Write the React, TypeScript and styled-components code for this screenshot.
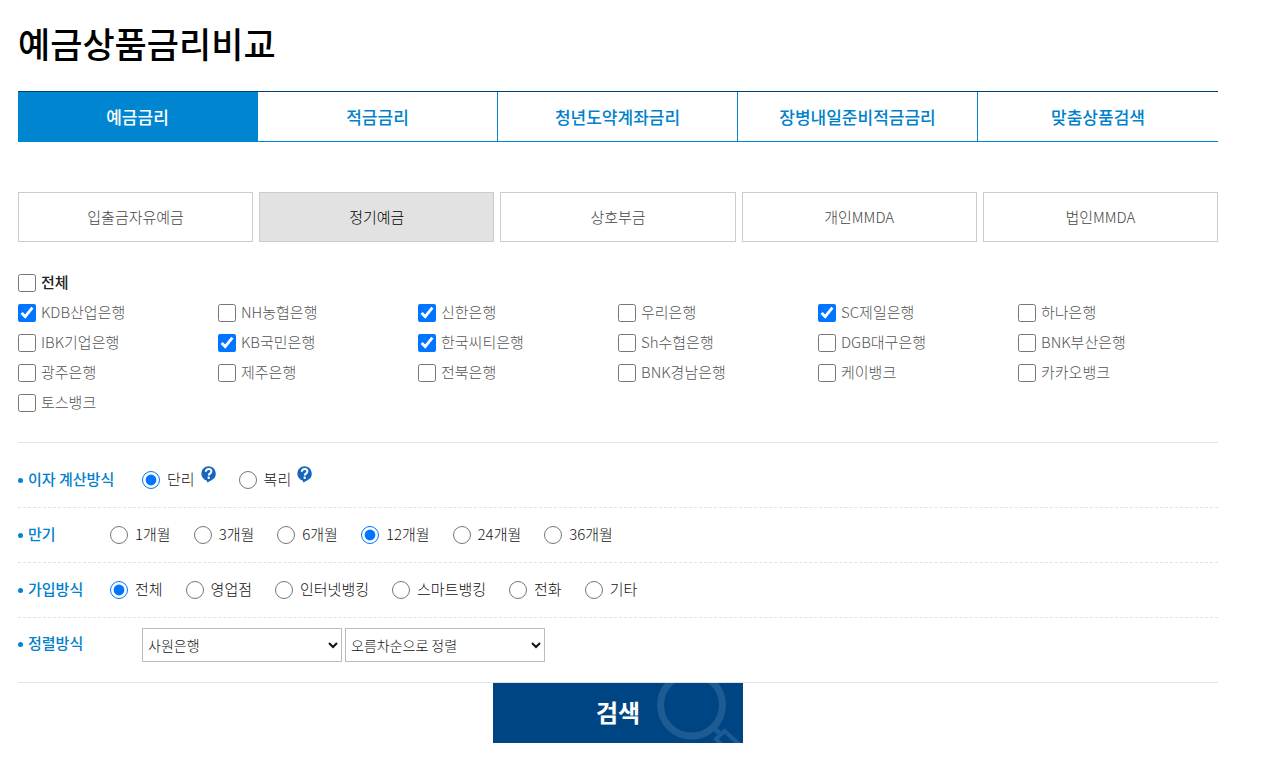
import React, { useState } from "react";
import styled, { createGlobalStyle } from "styled-components";

const GlobalStyle = createGlobalStyle`
  *, *::before, *::after { box-sizing: border-box; }
  body {
    margin: 0;
    background: #fff;
    color: #111;
    font-family: "Noto Sans CJK KR", sans-serif;
    font-size: 15px;
    font-weight: 300;
    line-height: 20px;
  }
  button, select, input { font-family: inherit; }
`;

const Page = styled.main`
  padding: 16px 51px 16px 18px;
`;

const Title = styled.h1`
  margin: 0 0 22px;
  color: #000;
  font-size: 35px;
  font-weight: 500;
  line-height: 53px;
`;

const Tabs = styled.nav`
  display: grid;
  grid-template-columns: repeat(5, 1fr);
  margin-bottom: 50px;
  border-top: 1px solid #004178;
`;

const Tab = styled.a<{ $active: boolean }>`
  display: flex;
  align-items: center;
  justify-content: center;
  height: 50px;
  border-right: 1px solid #0086d1;
  border-bottom: 1px solid #0086d1;
  background: ${(p) => (p.$active ? "#0086d1" : "#fff")};
  color: ${(p) => (p.$active ? "#fff" : "#0081cc")};
  font-size: 17px;
  font-weight: 500;
  text-decoration: none;
  &:last-child { border-right: 0; }
`;

const Kinds = styled.div`
  display: grid;
  grid-template-columns: repeat(5, 1fr);
  gap: 6px;
  margin-bottom: 26px;
`;

const Kind = styled.button<{ $active: boolean }>`
  height: 50px;
  padding: 0 0 2px;
  border: 1px solid #ccc;
  background: ${(p) => (p.$active ? "#e2e2e2" : "#fff")};
  color: ${(p) => (p.$active ? "#000" : "#444")};
  font-size: 15px;
  font-weight: 300;
  cursor: pointer;
`;

const Banks = styled.div`
  display: grid;
  grid-template-columns: repeat(6, 1fr);
  padding-bottom: 24px;
  border-bottom: 1px solid #e2e2e2;
`;

const CheckLabel = styled.label<{ $all?: boolean }>`
  display: flex;
  align-items: center;
  gap: 5px;
  height: 30px;
  grid-column: ${(p) => (p.$all ? "1 / -1" : "auto")};
  color: ${(p) => (p.$all ? "#222" : "#555")};
  font-weight: ${(p) => (p.$all ? 500 : 300)};
`;

const Tick = styled.input`
  width: 18px;
  height: 18px;
  margin: 0;
`;

const Caption = styled.span`
  padding-bottom: 2px;
`;

const Options = styled.div`
  padding-top: 10px;
  border-bottom: 1px solid #e2e2e2;
`;

const Row = styled.div`
  display: flex;
  align-items: center;
  height: 55px;
  border-bottom: 1px dashed #e2e2e2;
`;

const SortRow = styled.div`
  display: flex;
  align-items: flex-start;
  padding: 10px 0 20px;
`;

const RowLabel = styled.span<{ $wide?: boolean }>`
  display: flex;
  align-items: center;
  gap: 5px;
  flex: 0 0 ${(p) => (p.$wide ? 124 : 92)}px;
  height: 32px;
  color: #0081cc;
  font-weight: 500;
  &::before {
    content: "";
    width: 5px;
    height: 5px;
    border-radius: 50%;
    background: #0086d1;
  }
`;

const Choices = styled.div`
  display: flex;
  gap: 23px;
`;

const Choice = styled.div`
  display: flex;
  align-items: flex-start;
  gap: 6px;
`;

const RadioLabel = styled.label`
  display: flex;
  align-items: center;
  gap: 7px;
  height: 28px;
`;

const Help = styled.button`
  width: 15px;
  height: 17px;
  padding: 0;
  border: 0;
  background: none;
  cursor: pointer;
  svg { display: block; }
`;

const Selects = styled.div`
  display: flex;
  gap: 3px;
`;

const Select = styled.select`
  width: 200px;
  height: 34px;
  padding: 0 1px 1px;
  border: 1px solid #bbb;
  border-radius: 0;
  background: #fff;
  color: #111;
  font-size: 14px;
  font-weight: 300;
`;

const Search = styled.button`
  display: block;
  position: relative;
  width: 250px;
  height: 60px;
  margin: 0 auto;
  padding: 0 0 4px;
  border: 0;
  overflow: hidden;
  background: #004583;
  color: #fff;
  font-size: 24px;
  font-weight: 700;
  cursor: pointer;
`;

const Lens = styled.svg`
  position: absolute;
  right: 0;
  top: 0;
`;

const tabs = ["예금금리", "적금금리", "청년도약계좌금리", "장병내일준비적금금리", "맞춤상품검색"];
const kinds = ["입출금자유예금", "정기예금", "상호부금", "개인MMDA", "법인MMDA"];
const banks = [
  "KDB산업은행", "NH농협은행", "신한은행", "우리은행", "SC제일은행", "하나은행",
  "IBK기업은행", "KB국민은행", "한국씨티은행", "Sh수협은행", "DGB대구은행", "BNK부산은행",
  "광주은행", "제주은행", "전북은행", "BNK경남은행", "케이뱅크", "카카오뱅크",
  "토스뱅크",
];
const preset = ["KDB산업은행", "신한은행", "SC제일은행", "KB국민은행", "한국씨티은행"];

type RadioRowProps = {
  label: string;
  name: string;
  items: string[];
  initial: string;
  help?: boolean;
};

function RadioRow({ label, name, items, initial, help }: RadioRowProps) {
  return (
    <Row role="radiogroup" aria-labelledby={`${name}-label`}>
      <RowLabel id={`${name}-label`} $wide={help}><Caption>{label}</Caption></RowLabel>
      <Choices>
        {items.map((item) => (
          <Choice key={item}>
            <RadioLabel>
              <Tick type="radio" name={name} defaultChecked={item === initial} />
              <Caption>{item}</Caption>
            </RadioLabel>
            {help && (
              <Help type="button" aria-label={`${item} 도움말`}>
                <svg width="15" height="17" viewBox="0 0 15 17">
                  <path d="M7.5 0.2a7.3 7.3 0 0 1 3.4 13.7L6.4 16.6 5.6 14.5A7.3 7.3 0 0 1 7.5 0.2z" fill="#1766be" />
                  <path d="M4.8 5.7C4.9 3.8 6 3 7.6 3c1.6 0 2.8.9 2.8 2.4 0 2-2.6 2-2.6 4" fill="none" stroke="#fff" strokeWidth="2" />
                  <circle cx="7.7" cy="11.7" r="1.2" fill="#fff" />
                </svg>
              </Help>
            )}
          </Choice>
        ))}
      </Choices>
    </Row>
  );
}

export default function App() {
  const [kind, setKind] = useState("정기예금");
  const [checked, setChecked] = useState<string[]>(preset);
  const toggle = (bank: string) =>
    setChecked((list) => (list.includes(bank) ? list.filter((b) => b !== bank) : [...list, bank]));
  const all = checked.length === banks.length;

  return (
    <Page>
      <GlobalStyle />
      <Title>예금상품금리비교</Title>
      <Tabs>
        {tabs.map((tab, i) => (
          <Tab key={tab} href="#" $active={i === 0}>{tab}</Tab>
        ))}
      </Tabs>
      <Kinds>
        {kinds.map((k) => (
          <Kind key={k} type="button" $active={k === kind} onClick={() => setKind(k)}>{k}</Kind>
        ))}
      </Kinds>
      <Banks>
        <CheckLabel $all>
          <Tick type="checkbox" checked={all} onChange={() => setChecked(all ? [] : banks)} />
          <Caption>전체</Caption>
        </CheckLabel>
        {banks.map((bank) => (
          <CheckLabel key={bank}>
            <Tick type="checkbox" checked={checked.includes(bank)} onChange={() => toggle(bank)} />
            <Caption>{bank}</Caption>
          </CheckLabel>
        ))}
      </Banks>
      <Options>
        <RadioRow label="이자 계산방식" name="interest" items={["단리", "복리"]} initial="단리" help />
        <RadioRow label="만기" name="term" items={["1개월", "3개월", "6개월", "12개월", "24개월", "36개월"]} initial="12개월" />
        <RadioRow label="가입방식" name="channel" items={["전체", "영업점", "인터넷뱅킹", "스마트뱅킹", "전화", "기타"]} initial="전체" />
        <SortRow>
          <RowLabel $wide><Caption>정렬방식</Caption></RowLabel>
          <Selects>
            <Select aria-label="정렬 기준">
              <option>사원은행</option>
            </Select>
            <Select aria-label="정렬 순서">
              <option>오름차순으로 정렬</option>
            </Select>
          </Selects>
        </SortRow>
      </Options>
      <Search type="button">
        검색
        <Lens width="90" height="60" viewBox="0 0 90 60" fill="none" stroke="#1c5b93" aria-hidden="true">
          <circle cx="38.5" cy="22" r="31" strokeWidth="7" />
          <path d="M60 44l7 7" strokeWidth="5" />
          <path d="M69 62L63 56l8.500-8 20 18" strokeWidth="4" />
        </Lens>
      </Search>
    </Page>
  );
}
